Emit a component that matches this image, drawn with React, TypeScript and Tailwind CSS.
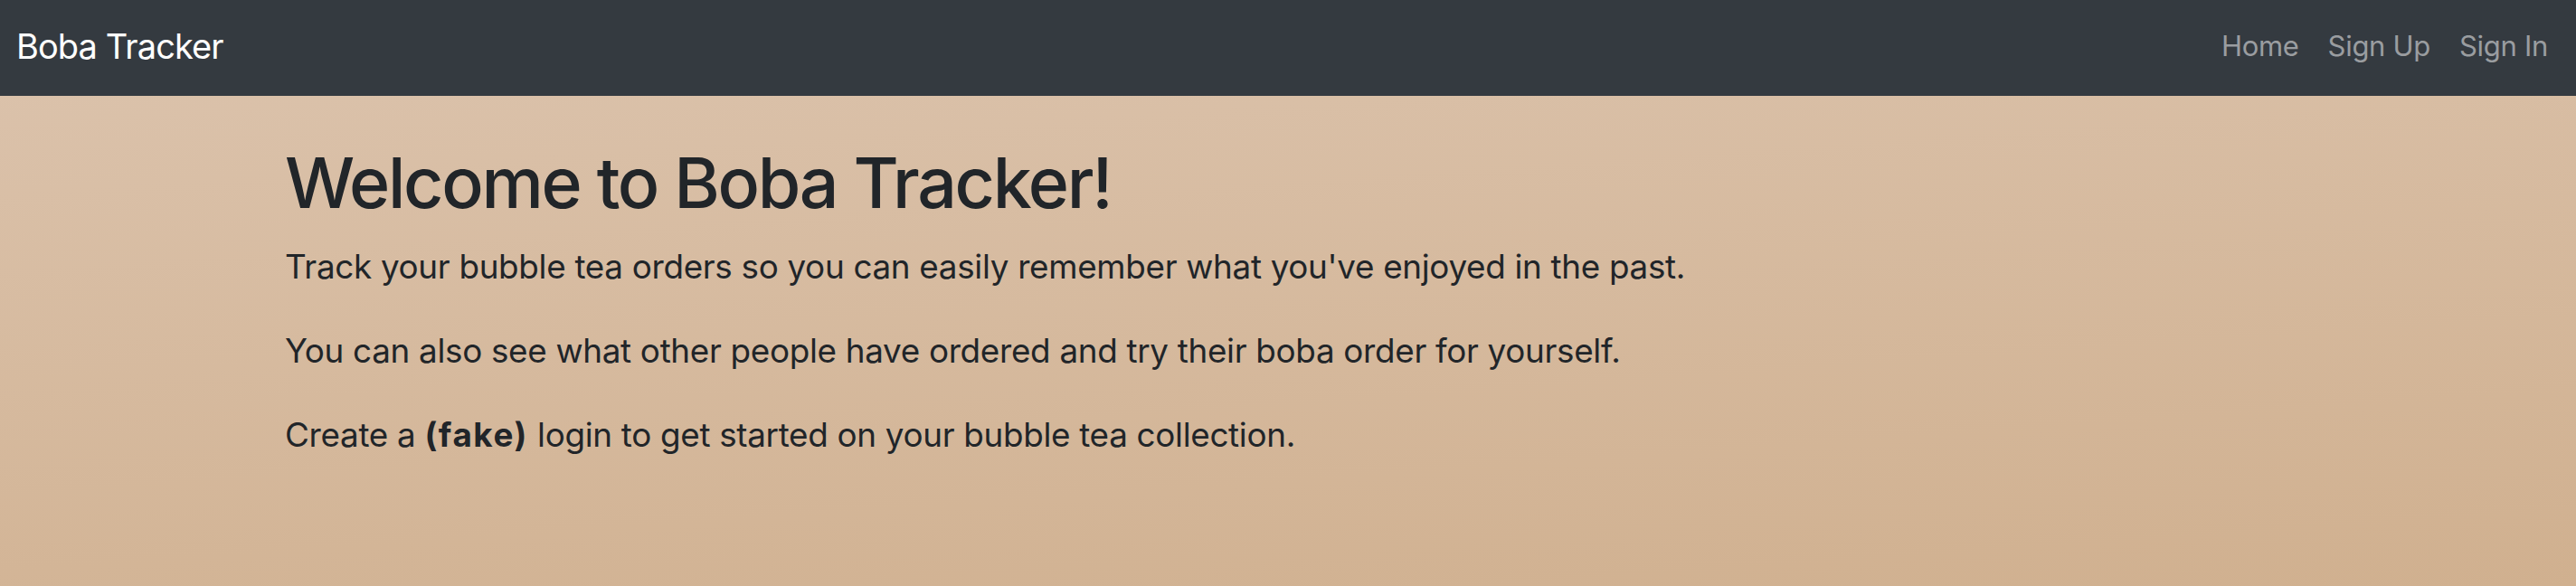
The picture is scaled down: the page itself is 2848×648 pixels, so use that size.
import React from "react";

export default function App() {
  return (
    <div className="min-h-[648px] w-full font-['Inter',sans-serif] text-[#212529] bg-[linear-gradient(176deg,#dcc4ae_0%,#d0b08f_100%)]">
      <nav className="h-[106px] bg-[#343a40] flex items-center justify-between pl-[18px] pr-[31px] pb-[5px]">
        <a className="text-white text-[38px] leading-none tracking-[-0.9px]">Boba Tracker</a>
        <div className="flex items-center gap-[32px] text-[31px] leading-none text-[#9a9da0] tracking-[-0.3px]">
          <a>Home</a>
          <a>Sign Up</a>
          <a>Sign In</a>
        </div>
      </nav>
      <main className="pl-[315px] pt-[48px] pb-[60px]">
        <h1 className="text-[77px] leading-[96px] font-medium tracking-[-2.3px]">Welcome to Boba Tracker!</h1>
        <div className="flex flex-col gap-[46px] mt-[21px] text-[36.8px] leading-[47px] tracking-[-0.3px]">
          <p>Track your bubble tea orders so you can easily remember what you've enjoyed in the past.</p>
          <p>You can also see what other people have ordered and try their boba order for yourself.</p>
          <p>
            Create a <b className="font-bold tracking-[1.6px]">(fake)</b> login to get started on your bubble tea collection.
          </p>
        </div>
      </main>
    </div>
  );
}
